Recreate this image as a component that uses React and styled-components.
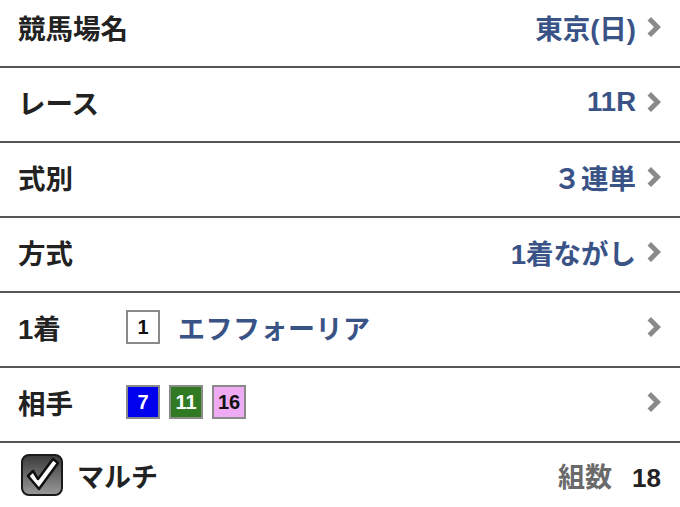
import styled, { createGlobalStyle } from "styled-components";

const GlobalStyle = createGlobalStyle`
  html, body {
    margin: 0;
    padding: 0;
    background: #fff;
    overflow: hidden;
  }
  body {
    font-family: "Liberation Sans", "Noto Sans CJK JP", sans-serif;
  }
`;

const rows = [
  { label: "競馬場名", value: "東京(日)" },
  { label: "レース", value: "11R" },
  { label: "式別", value: "３連単" },
  { label: "方式", value: "1着ながし" },
];

const waku = {
  1: { bg: "#ffffff", fg: "#111" },
  7: { bg: "#0000ee", fg: "#fff" },
  11: { bg: "#2f7a22", fg: "#fff" },
  16: { bg: "#eeaaf2", fg: "#111" },
};

function Chevron() {
  return (
    <svg width="14" height="20" viewBox="0 0 14 20">
      <polygon points="0.5,3.5 4,0 14,10 4,20 0.5,16.5 7,10" fill="#8a8a8a" />
    </svg>
  );
}

function CheckIcon() {
  return (
    <svg width="42" height="42" viewBox="0 0 42 42">
      <defs>
        <linearGradient id="cb" x1="0" y1="0" x2="0" y2="1">
          <stop offset="0" stopColor="#3a3a3a" />
          <stop offset="1" stopColor="#9a9a9a" />
        </linearGradient>
      </defs>
      <rect x="1" y="1" width="40" height="40" rx="7" fill="url(#cb)" stroke="#1a1a1a" strokeWidth="2" />
      <path
        d="M7 22 L12 17 L17 25 L32 5 L37 9 L18 35 Z"
        fill="#fff"
        stroke="#111"
        strokeWidth="2.5"
        strokeLinejoin="round"
      />
    </svg>
  );
}

export default function App() {
  return (
    <>
      <GlobalStyle />
      <List>
        {rows.map((r, i) => (
          <Row key={r.label} first={i === 0}>
            <Label>{r.label}</Label>
            <Right>
              <Value>{r.value}</Value>
              <Chevron />
            </Right>
          </Row>
        ))}
        <Row>
          <Label>1着</Label>
          <Boxes>
            <Waku num={1}>1</Waku>
            <HorseName>エフフォーリア</HorseName>
          </Boxes>
          <Right>
            <Chevron />
          </Right>
        </Row>
        <Row>
          <Label>相手</Label>
          <Boxes>
            {[7, 11, 16].map((n) => (
              <Waku key={n} num={n}>
                {n}
              </Waku>
            ))}
          </Boxes>
          <Right>
            <Chevron />
          </Right>
        </Row>
        <Footer>
          <CheckIcon />
          <Multi>マルチ</Multi>
          <Count>
            <CountLabel>組数</CountLabel>
            <CountNum>18</CountNum>
          </Count>
        </Footer>
      </List>
    </>
  );
}

const List = styled.div`
  display: flex;
  flex-direction: column;
  width: 680px;
  height: 507px;
  overflow: hidden;
`;

const Row = styled.div`
  box-sizing: border-box;
  display: flex;
  align-items: center;
  flex-shrink: 0;
  height: ${({ first }) => (first ? "68px" : "75px")};
  padding: ${({ first }) => (first ? "0 19px 13px 18px" : "0 19px 5px 18px")};
  border-bottom: 2px solid #555;
`;

const Label = styled.div`
  width: 108px;
  flex-shrink: 0;
  font-size: 27.5px;
  font-weight: bold;
  color: #222;
  white-space: nowrap;
`;

const Right = styled.div`
  margin-left: auto;
  display: flex;
  align-items: center;
  gap: 11px;
`;

const Value = styled.div`
  font-size: 27.5px;
  font-weight: bold;
  color: #3a5387;
  white-space: nowrap;
`;

const Boxes = styled.div`
  display: flex;
  align-items: center;
  gap: 9px;
`;

const Waku = styled.div`
  box-sizing: border-box;
  width: 34px;
  height: 34px;
  display: flex;
  align-items: center;
  justify-content: center;
  border: 2px solid #8a8a8a;
  background: ${({ num }) => waku[num].bg};
  color: ${({ num }) => waku[num].fg};
  font-size: 20px;
  font-weight: bold;
`;

const HorseName = styled.div`
  margin-left: 9px;
  font-size: 27px;
  font-weight: bold;
  color: #3a5387;
  letter-spacing: 0.5px;
`;

const Footer = styled.div`
  box-sizing: border-box;
  display: flex;
  align-items: center;
  flex-shrink: 0;
  height: 70px;
  padding: 0 19px 6px 21px;
`;

const Multi = styled.div`
  margin-left: 14px;
  font-size: 27px;
  font-weight: bold;
  color: #222;
`;

const Count = styled.div`
  margin-left: auto;
  display: flex;
  align-items: baseline;
  gap: 20px;
`;

const CountLabel = styled.div`
  font-size: 27px;
  font-weight: bold;
  color: #6a6a6a;
`;

const CountNum = styled.div`
  font-size: 26px;
  font-weight: bold;
  color: #222;
`;
